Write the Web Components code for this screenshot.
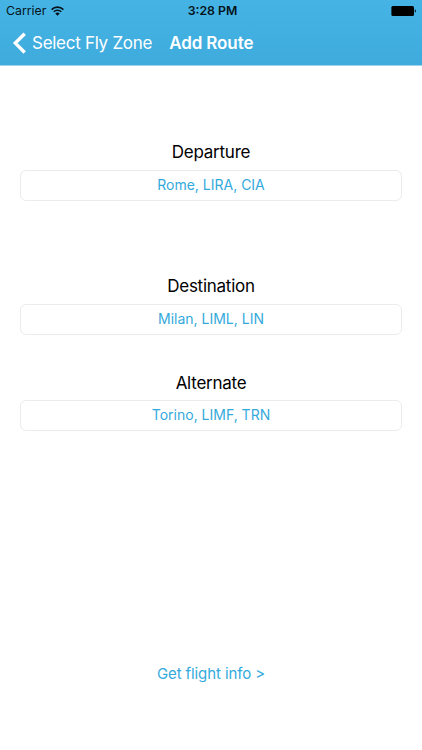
<!DOCTYPE html>
<html lang="en">
<head>
<meta charset="utf-8">
<title>Add Route</title>
<style>
  body {
    margin: 0;
    background: #fff;
    font-family: Inter, "Liberation Sans", sans-serif;
    --tint: #34aadc;
  }
</style>
</head>
<body>
<route-screen>
  <status-bar slot="header" carrier="Carrier" time="3:28 PM"></status-bar>
  <nav-bar slot="header" back="Select Fly Zone">Add Route</nav-bar>
  <route-field label="Departure">Rome, LIRA, CIA</route-field>
  <route-field label="Destination" style="margin-top: 73px">Milan, LIML, LIN</route-field>
  <route-field label="Alternate" style="margin-top: 36px; --label-gap: 5px">Torino, LIMF, TRN</route-field>
  <link-button slot="footer">Get flight info &gt;</link-button>
</route-screen>

<script>
class RouteScreen extends HTMLElement {
  constructor() {
    super();
    this.attachShadow({ mode: 'open' });
    this.shadowRoot.innerHTML = `
      <style>
        :host {
          display: flex;
          flex-direction: column;
          width: 422px;
          height: 750px;
          overflow: hidden;
        }
        header {
          height: 65px;
          background: linear-gradient(#45b4e5, #3eabdc);
          border-bottom: 1px solid #9fd3eb;
        }
        main {
          flex: 1;
          padding: 74px 20px 0;
        }
        footer {
          display: flex;
          justify-content: center;
          padding-bottom: 66px;
        }
      </style>
      <header><slot name="header"></slot></header>
      <main><slot></slot></main>
      <footer><slot name="footer"></slot></footer>
    `;
  }
}

class StatusBar extends HTMLElement {
  constructor() {
    super();
    this.attachShadow({ mode: 'open' });
  }

  connectedCallback() {
    const carrier = this.getAttribute('carrier') || '';
    const time = this.getAttribute('time') || '';

    this.shadowRoot.innerHTML = `
      <style>
        :host {
          display: grid;
          grid-template-columns: 1fr auto 1fr;
          align-items: center;
          height: 22px;
          padding: 0 6px;
          color: #06131a;
          font-size: 12.3px;
          line-height: 22px;
        }
        .carrier {
          display: flex;
          align-items: center;
          gap: 5px;
        }
        .time {
          padding-left: 3px;
          font-weight: 600;
        }
        .battery {
          justify-self: end;
        }
        svg {
          display: block;
        }
      </style>
      <div class="carrier">
        <span>${carrier}</span>
        <svg width="13" height="10" viewBox="0 0 13 10" fill="none" stroke="#06131a" stroke-width="1.6">
          <path d="M.6 3.6a8.3 8.3 0 0 1 11.8 0"/>
          <path d="M2.8 5.8a5.2 5.2 0 0 1 7.4 0"/>
          <path d="M6.5 9.8L4.3 7.5a3.2 3.2 0 0 1 4.4 0z" fill="#06131a" stroke="none"/>
        </svg>
      </div>
      <span class="time">${time}</span>
      <svg class="battery" width="25" height="11" viewBox="0 0 25 11">
        <rect x="0.4" y="0.1" width="22.6" height="9.8" rx="1.5" fill="#000"/>
        <path d="M23.8 3.3q1.1.4 1.1 1.7t-1.1 1.7z" fill="#000"/>
      </svg>
    `;
  }
}

class NavBar extends HTMLElement {
  constructor() {
    super();
    this.attachShadow({ mode: 'open' });
  }

  connectedCallback() {
    const back = this.getAttribute('back') || 'Back';

    this.shadowRoot.innerHTML = `
      <style>
        :host {
          display: flex;
          align-items: center;
          height: 42px;
          padding-left: 12px;
          color: #fff;
          font-size: 17px;
          white-space: nowrap;
        }
        svg {
          margin-right: 6px;
        }
        .back {
          letter-spacing: -0.28px;
        }
        .title {
          margin-left: 17px;
          font-weight: 600;
          letter-spacing: -0.1px;
        }
      </style>
      <svg width="14" height="22" viewBox="0 0 14 22" fill="none" stroke="#fff" stroke-width="3.4">
        <path d="M12.7 1.7L3.3 11.1l9.4 9.4"/>
      </svg>
      <span class="back">${back}</span>
      <span class="title"><slot></slot></span>
    `;
  }
}

class RouteField extends HTMLElement {
  constructor() {
    super();
    this.attachShadow({ mode: 'open' });
  }

  connectedCallback() {
    const label = this.getAttribute('label') || '';

    this.shadowRoot.innerHTML = `
      <style>
        :host {
          display: block;
          text-align: center;
        }
        .label {
          height: 24px;
          margin-bottom: var(--label-gap, 6px);
          color: #000;
          font-size: 17px;
          letter-spacing: -0.25px;
          line-height: 24px;
        }
        .value {
          box-sizing: border-box;
          height: 31px;
          border: 1px solid #ececec;
          border-radius: 6px;
          color: var(--tint);
          font-size: 14px;
          line-height: 28px;
        }
      </style>
      <div class="label">${label}</div>
      <div class="value"><slot></slot></div>
    `;
  }
}

class LinkButton extends HTMLElement {
  constructor() {
    super();
    this.attachShadow({ mode: 'open' });
    this.shadowRoot.innerHTML = `
      <style>
        :host {
          display: block;
          color: var(--tint);
          font-size: 15px;
          letter-spacing: -0.1px;
          line-height: 20px;
        }
      </style>
      <slot></slot>
    `;
  }
}

customElements.define('route-screen', RouteScreen);
customElements.define('status-bar', StatusBar);
customElements.define('nav-bar', NavBar);
customElements.define('route-field', RouteField);
customElements.define('link-button', LinkButton);
</script>
</body>
</html>
